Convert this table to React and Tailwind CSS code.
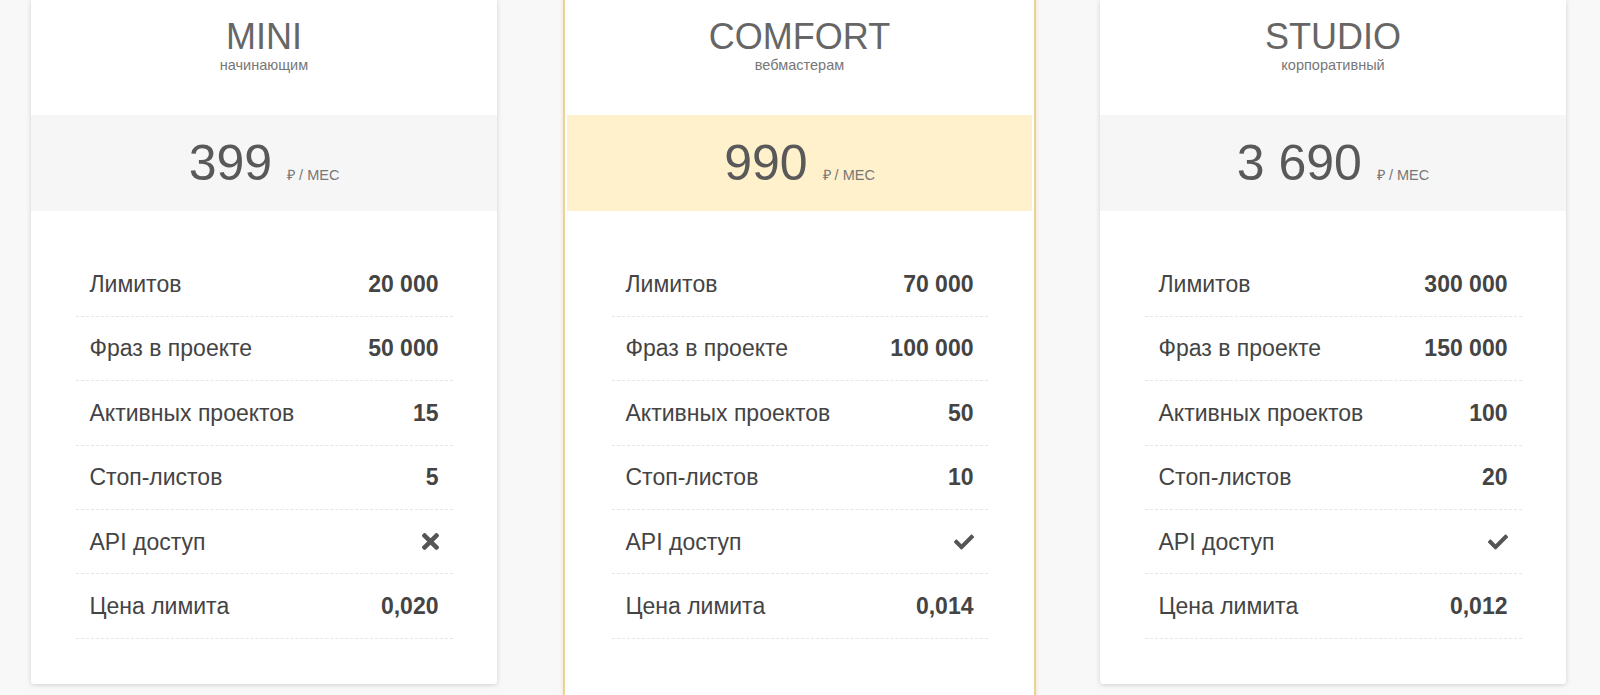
import React from "react";
import { FaTimes, FaCheck } from "react-icons/fa";

const plans = [
  {
    name: "MINI",
    sub: "начинающим",
    price: "399",
    featured: false,
    rows: ["20 000", "50 000", "15", "5", "x", "0,020"],
  },
  {
    name: "COMFORT",
    sub: "вебмастерам",
    price: "990",
    featured: true,
    rows: ["70 000", "100 000", "50", "10", "v", "0,014"],
  },
  {
    name: "STUDIO",
    sub: "корпоративный",
    price: "3 690",
    featured: false,
    rows: ["300 000", "150 000", "100", "20", "v", "0,012"],
  },
];

const labels = [
  "Лимитов",
  "Фраз в проекте",
  "Активных проектов",
  "Стоп-листов",
  "API доступ",
  "Цена лимита",
];

function Value({ v }) {
  if (v === "x")
    return <FaTimes className="text-[#555]" style={{ width: 17, height: 25 }} />;
  if (v === "v")
    return <FaCheck className="text-[#555]" style={{ width: 20, height: 20 }} />;
  return <span className="font-bold text-[#444]">{v}</span>;
}

function CardBody({ plan }) {
  return (
    <>
      <div className="h-[115px] pt-[19px] flex flex-col items-center">
        <div className="text-[36px] leading-[36px] text-[#666]">{plan.name}</div>
        <div className="mt-[3px] text-[14.5px] leading-[14px] text-[#777]">{plan.sub}</div>
      </div>
      <div
        className={
          "h-[96px] flex items-center justify-center " +
          (plan.featured ? "bg-[#fff1cc]" : "bg-[#f6f6f6]")
        }
      >
        <div className="flex items-baseline">
          <span className="text-[50px] leading-[50px] text-[#595959]">{plan.price}</span>
          <span className="ml-[15px] text-[14.5px] text-[#777]">₽ / МЕС</span>
        </div>
      </div>
      <div className="pt-[41.5px] px-[44.5px]">
        {labels.map((l, i) => (
          <div
            key={l}
            className="h-[64.4px] flex items-center justify-between px-[14px] border-b border-dashed border-[#e6e6e6] text-[23px] text-[#444]"
          >
            <span>{l}</span>
            <Value v={plan.rows[i]} />
          </div>
        ))}
      </div>
    </>
  );
}

function Card({ plan }) {
  if (plan.featured) {
    return (
      <div className="w-[473px] pb-[80px] px-[2px] bg-white border-2 border-t-0 border-[#ebd397] shadow-[0_0_4px_rgba(225,195,120,0.45)]">
        <CardBody plan={plan} />
      </div>
    );
  }
  return (
    <div className="w-[466px] pb-[45px] bg-white rounded-b-[3px] shadow-[0_1px_5px_rgba(0,0,0,0.16)]">
      <CardBody plan={plan} />
    </div>
  );
}

export default function App() {
  return (
    <div
      className="w-[1600px] h-[695px] overflow-hidden bg-[#f8f8f8] flex items-start pl-[31px]"
      style={{ fontFamily: '"Liberation Sans", Arial, sans-serif' }}
    >
      <Card plan={plans[0]} />
      <div className="ml-[66px]">
        <Card plan={plans[1]} />
      </div>
      <div className="ml-[64px]">
        <Card plan={plans[2]} />
      </div>
    </div>
  );
}
